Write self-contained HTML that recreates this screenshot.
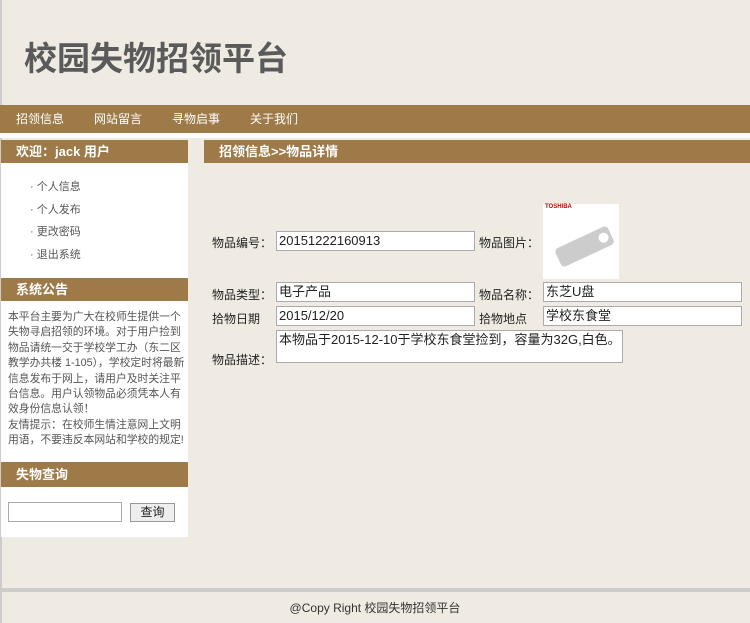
<!DOCTYPE html><html><head><meta charset="utf-8"><style>
*{margin:0;padding:0;box-sizing:border-box}
body{width:750px;height:623px;background:#efebe3;font-family:"Liberation Sans","Noto Sans CJK SC",sans-serif;position:relative;overflow:hidden;color:#333}
.a{position:absolute}
.brown{background:#9e7a48;color:#fff}
.h{font-size:13px;font-weight:bold;line-height:23px;padding-left:15px}
.inp{position:absolute;background:#fff;border:1px solid #aaa;font-size:13px;line-height:18px;padding-left:2px;color:#222}
.lbl{position:absolute;font-size:12px;color:#222}
</style></head><body>
<div class="a" style="left:0;top:0;width:2px;height:623px;background:#ccc"></div>
<div class="a" style="left:24px;top:32px;font-size:33px;font-weight:bold;color:#5a5a5a">校园失物招领平台</div>
<div class="a brown" style="left:0;top:105px;width:750px;height:28px;font-size:12px;line-height:28px">
<span class="a" style="left:16px">招领信息</span><span class="a" style="left:94px">网站留言</span><span class="a" style="left:172px">寻物启事</span><span class="a" style="left:250px">关于我们</span></div>
<div class="a" style="left:0;top:133px;width:750px;height:5px;background:#fff"></div>
<div class="a" style="left:1px;top:163px;width:187px;height:374px;background:#fff"></div>
<div class="a brown h" style="left:1px;top:140px;width:187px">欢迎：jack 用户</div>
<div class="a" style="left:30px;top:176px;font-size:11px;color:#555;line-height:22.7px">· 个人信息<br>· 个人发布<br>· 更改密码<br>· 退出系统</div>
<div class="a brown h" style="left:1px;top:278px;width:187px">系统公告</div>
<div class="a" style="left:8px;top:310px;width:177px;font-size:10.8px;color:#555;line-height:15.4px">本平台主要为广大在校师生提供一个失物寻启招领的环境。对于用户捡到物品请统一交于学校学工办（东二区教学办共楼 1-105），学校定时将最新信息发布于网上，请用户及时关注平台信息。用户认领物品必须凭本人有效身份信息认领！<br>友情提示：在校师生情注意网上文明用语，不要违反本网站和学校的规定!</div>
<div class="a brown h" style="left:1px;top:462px;width:187px;height:25px;line-height:25px">失物查询</div>
<div class="a" style="left:8px;top:502px;width:114px;height:20px;background:#fff;border:1px solid #aaa"></div>
<div class="a" style="left:130px;top:503px;width:45px;height:19px;background:#eee;border:1px solid #999;font-size:12px;text-align:center;line-height:17px;color:#222">查询</div>
<div class="a brown h" style="left:204px;top:140px;width:546px">招领信息&gt;&gt;物品详情</div>
<div class="lbl" style="left:212px;top:234px">物品编号：</div>
<div class="inp" style="left:276px;top:231px;width:199px;height:20px">20151222160913</div>
<div class="lbl" style="left:479px;top:234px">物品图片：</div>
<div class="a" style="left:543px;top:204px;width:76px;height:75px;background:#fff">
<div class="a" style="left:2px;top:0;font-size:6px;font-weight:bold;color:#c00">TOSHIBA</div>
<svg class="a" style="left:0;top:0" width="76" height="75"><g transform="rotate(-25 38 42)"><rect x="12" y="34" width="58" height="20" rx="4" fill="#ccc"/><circle cx="62" cy="44" r="5" fill="#fff"/></g></svg></div>
<div class="lbl" style="left:212px;top:286px">物品类型：</div>
<div class="inp" style="left:276px;top:282px;width:199px;height:20px">电子产品</div>
<div class="lbl" style="left:479px;top:286px">物品名称：</div>
<div class="inp" style="left:543px;top:282px;width:199px;height:20px">东芝U盘</div>
<div class="lbl" style="left:212px;top:310px">拾物日期</div>
<div class="inp" style="left:276px;top:306px;width:199px;height:20px">2015/12/20</div>
<div class="lbl" style="left:479px;top:310px">拾物地点</div>
<div class="inp" style="left:543px;top:306px;width:199px;height:20px">学校东食堂</div>
<div class="lbl" style="left:212px;top:351px">物品描述：</div>
<div class="inp" style="left:276px;top:330px;width:347px;height:33px">本物品于2015-12-10于学校东食堂捡到，容量为32G,白色。</div>
<div class="a" style="left:0;top:588px;width:750px;height:4px;background:#ccc"></div>
<div class="a" style="left:0;top:599px;width:750px;text-align:center;font-size:12px;color:#333">@Copy Right 校园失物招领平台</div>
</body></html>
